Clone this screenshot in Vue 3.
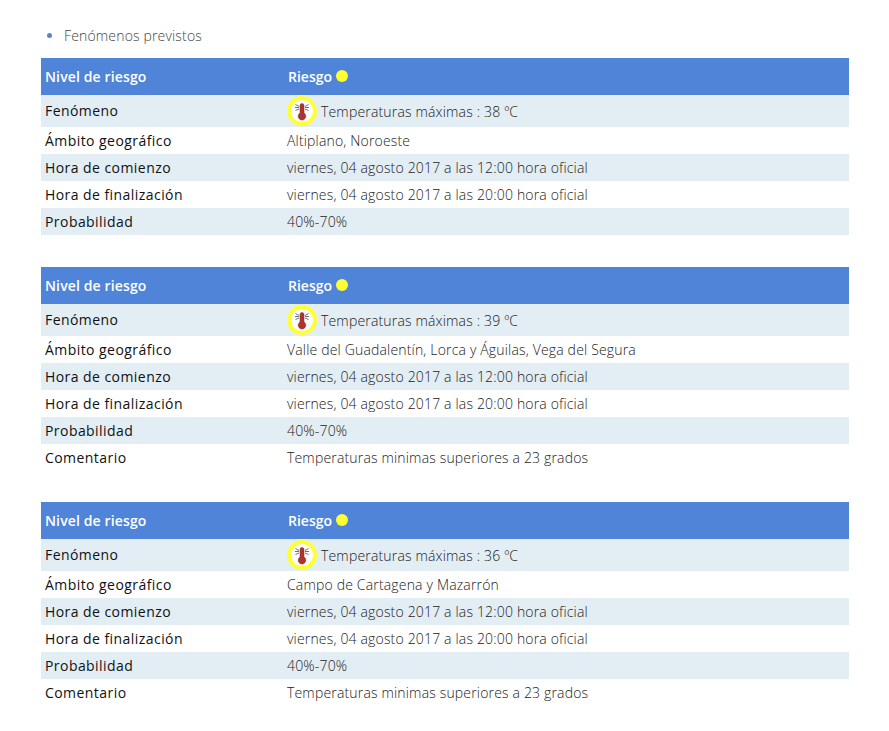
<script setup>
const slot = 'viernes, 04 agosto 2017 a las '
const comment = 'Temperaturas minimas superiores a 23 grados'
const tables = [
  { temp: 38, area: 'Altiplano, Noroeste' },
  { temp: 39, area: 'Valle del Guadalentín, Lorca y Águilas, Vega del Segura', comment },
  { temp: 36, area: 'Campo de Cartagena y Mazarrón', comment }
]
function rows(t) {
  const r = [
    ['Ámbito geográfico', t.area],
    ['Hora de comienzo', slot + '12:00 hora oficial'],
    ['Hora de finalización', slot + '20:00 hora oficial'],
    ['Probabilidad', '40%-70%']
  ]
  if (t.comment) r.push(['Comentario', t.comment])
  return r
}
</script>

<template>
  <div class="page">
    <ul class="list"><li>Fenómenos previstos</li></ul>
    <table v-for="t in tables" :key="t.temp" class="risk">
      <thead>
        <tr class="head">
          <th class="c1">Nivel de riesgo</th>
          <th class="c2">Riesgo <span class="dot"></span></th>
        </tr>
      </thead>
      <tbody>
        <tr class="phen">
          <td class="c1">Fenómeno</td>
          <td>
            <div class="phen-cell">
              <span class="badge">
                <svg width="20" height="20" viewBox="0 0 20 20">
                  <g stroke="#707070" stroke-width="1" fill="none">
                    <path d="M3.500 3.500 7 5.500M3 6.500h4M3.500 9.500 7 8M16.500 3.500 13 5.500M17 6.500h-4M16.500 9.500 13 8" />
                  </g>
                  <path d="M8 4.500a2 2 0 0 1 4 0v7.500a3.800 3.800 0 1 1-4 0z" fill="#ad342f" stroke="#7d2b29" stroke-width=".5" />
                </svg>
              </span>
              <span>Temperaturas máximas : {{ t.temp }} ºC</span>
            </div>
          </td>
        </tr>
        <tr v-for="(r, i) in rows(t)" :key="r[0]" :class="i % 2 ? 'shade' : ''">
          <td class="c1">{{ r[0] }}</td>
          <td>{{ r[1] }}</td>
        </tr>
      </tbody>
    </table>
  </div>
</template>

<style scoped>
.page {
  width: 889px;
  height: 731px;
  box-sizing: border-box;
  padding: 26px 40px 0 41px;
  background: #fff;
  font-family: "Open Sans", "Liberation Sans", sans-serif;
  font-size: 14px;
  color: #333;
  overflow: hidden;
}
.list {
  margin: 0 0 12px;
  padding: 0 0 0 23px;
  height: 20px;
  line-height: 20px;
  font-weight: 300;
  color: #444;
  letter-spacing: 0.16px;
}
.list li::marker {
  color: #5b84c4;
}
.risk {
  width: 808px;
  border-collapse: collapse;
  table-layout: fixed;
  margin-bottom: 32px;
}
.risk:nth-of-type(2) {
  margin-bottom: 31px;
}
th, td {
  box-sizing: border-box;
  padding: 0 4px;
  text-align: left;
  height: 27px;
  font-weight: 300;
  color: #222;
  vertical-align: middle;
  letter-spacing: 0.17px;
}
td.c1 {
  font-weight: 400;
  color: #111;
  letter-spacing: 0.44px;
}
.c1 {
  width: 242px;
}
.head th {
  height: 37px;
  background: #4f84d8;
  color: #fff;
  font-weight: 600;
  letter-spacing: 0.13px;
}
.head .c2 {
  padding-left: 5px;
  letter-spacing: 0;
}
.dot {
  display: inline-block;
  width: 12px;
  height: 12px;
  border-radius: 50%;
  background: #ffff33;
  vertical-align: 0;
}
.phen td {
  height: 32px;
  background: #e2edf4;
}
.phen td.c1 {
  padding-bottom: 2px;
}
.phen-cell {
  display: flex;
  align-items: center;
  gap: 4px;
}
.badge {
  box-sizing: border-box;
  width: 30px;
  height: 30px;
  border: 4px solid #ffff33;
  border-radius: 50%;
  background: #fff;
  display: flex;
  align-items: center;
  justify-content: center;
}
.shade td {
  background: #e2edf4;
}
</style>
